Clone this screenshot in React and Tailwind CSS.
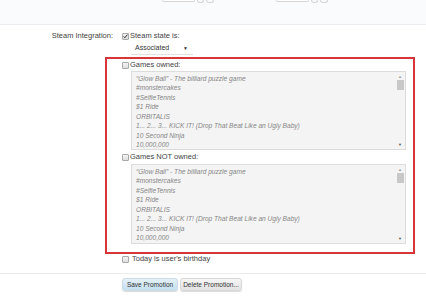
import React from 'react';

const games = [
  '\u201CGlow Ball\u201D - The billiard puzzle game',
  '#monstercakes',
  '#SelfieTennis',
  '$1 Ride',
  'ORBITALIS',
  '1... 2... 3... KICK IT! (Drop That Beat Like an Ugly Baby)',
  '10 Second Ninja',
  '10,000,000',
];

const Box = ({ checked }) => (
  <span className="w-[7px] h-[7px] border border-[#a9a9a9] bg-gradient-to-b from-[#f4f4f4] to-[#dedede] rounded-[1px] flex items-center justify-center shrink-0">
    {checked && (
      <svg viewBox="0 0 8 8" className="w-[7px] h-[7px]">
        <path d="M1 4 L3 6 L7 1" stroke="#222" strokeWidth="1.6" fill="none" />
      </svg>
    )}
  </span>
);

const GameList = ({ h }) => (
  <div className={`ml-[24px] w-[275px] ${h} border border-[#dcdcdc] bg-[#f4f4f4] flex overflow-hidden`}>
    <div className="flex-1 pl-[4px] pt-[1.5px] italic text-[#868686] text-[6.6px] leading-[9.5px] whitespace-nowrap">
      {games.map((g) => (
        <div key={g}>{g}</div>
      ))}
    </div>
    <div className="w-[10px] flex flex-col items-center pt-[3px] pb-[2px]">
      <span className="text-[4px] leading-[4px] text-[#999]">▲</span>
      <span className="w-[7px] h-[10px] bg-[#c8c8c8] mt-[1px]"></span>
      <span className="flex-1"></span>
      <span className="text-[4px] leading-[4px] text-[#555]">▼</span>
    </div>
  </div>
);

const App = () => {
  return (
    <div className="w-[426px] h-[300px] bg-white overflow-hidden text-[#444] text-[7.5px]" style={{ fontFamily: '"Liberation Sans", Arial, sans-serif' }}>
      <div className="h-[25px] bg-[#fafbfd] border-b border-[#eceef2] flex">
        <div className="ml-[162px] flex gap-[2px]">
          <span className="w-[33px] h-[2px] border border-t-0 border-[#d5d5d5] bg-white rounded-b-[2px]"></span>
          <span className="w-[7px] h-[3px] border border-t-0 border-[#d5d5d5] rounded-b-full"></span>
          <span className="w-[8px] h-[3px] border border-t-0 border-[#d5d5d5] rounded-b-full"></span>
        </div>
        <div className="ml-[62px] flex gap-[2px]">
          <span className="w-[33px] h-[2px] border border-t-0 border-[#d5d5d5] bg-white rounded-b-[2px]"></span>
          <span className="w-[7px] h-[3px] border border-t-0 border-[#d5d5d5] rounded-b-full"></span>
          <span className="w-[8px] h-[3px] border border-t-0 border-[#d5d5d5] rounded-b-full"></span>
        </div>
      </div>

      <div className="flex items-center h-[12px] mt-[5px]">
        <span className="w-[113px] text-right">Steam Integration:</span>
        <span className="ml-[9px]"><Box checked /></span>
        <span className="ml-[1px]">Steam state is:</span>
      </div>

      <div className="ml-[131px] mt-[1px] w-[62px] h-[12px] bg-white border-b border-[#e2e2e2] flex items-center justify-between pl-[4px] pr-[5px] text-[#333] text-[7px]">
        <span>Associated</span>
        <span className="text-[5px]">▼</span>
      </div>

      <div className="ml-[105px] w-[310px] border-2 border-[#d8353a] mt-[2px] pb-[8px]">
        <div className="flex items-center h-[12px] ml-[15px]">
          <Box />
          <span className="ml-[1px]">Games owned:</span>
        </div>
        <GameList h="h-[79px]" />
        <div className="flex items-center h-[12px] ml-[15px] mt-[1px]">
          <Box />
          <span className="ml-[1px]">Games NOT owned:</span>
        </div>
        <div className="mt-[1px]">
          <GameList h="h-[80px]" />
        </div>
      </div>

      <div className="flex items-center h-[10px] ml-[122px]">
        <Box />
        <span className="ml-[3px]">Today is user's birthday</span>
      </div>

      <div className="border-b border-[#ececec] mt-[9px]"></div>

      <div className="flex gap-[2px] ml-[122px] mt-[4px] text-[6.5px] text-[#333]">
        <button className="w-[56px] h-[13px] rounded-[3px] bg-gradient-to-b from-[#e4f1f8] to-[#c4dfee] border border-[#c9dbe6] shadow-[0_1px_1px_rgba(0,0,0,0.15)]">Save Promotion</button>
        <button className="w-[62px] h-[13px] rounded-[3px] bg-gradient-to-b from-[#f6f6f6] to-[#e2e2e2] border border-[#d8d8d8] shadow-[0_1px_1px_rgba(0,0,0,0.15)]">Delete Promotion...</button>
      </div>
    </div>
  );
};

export default App;
